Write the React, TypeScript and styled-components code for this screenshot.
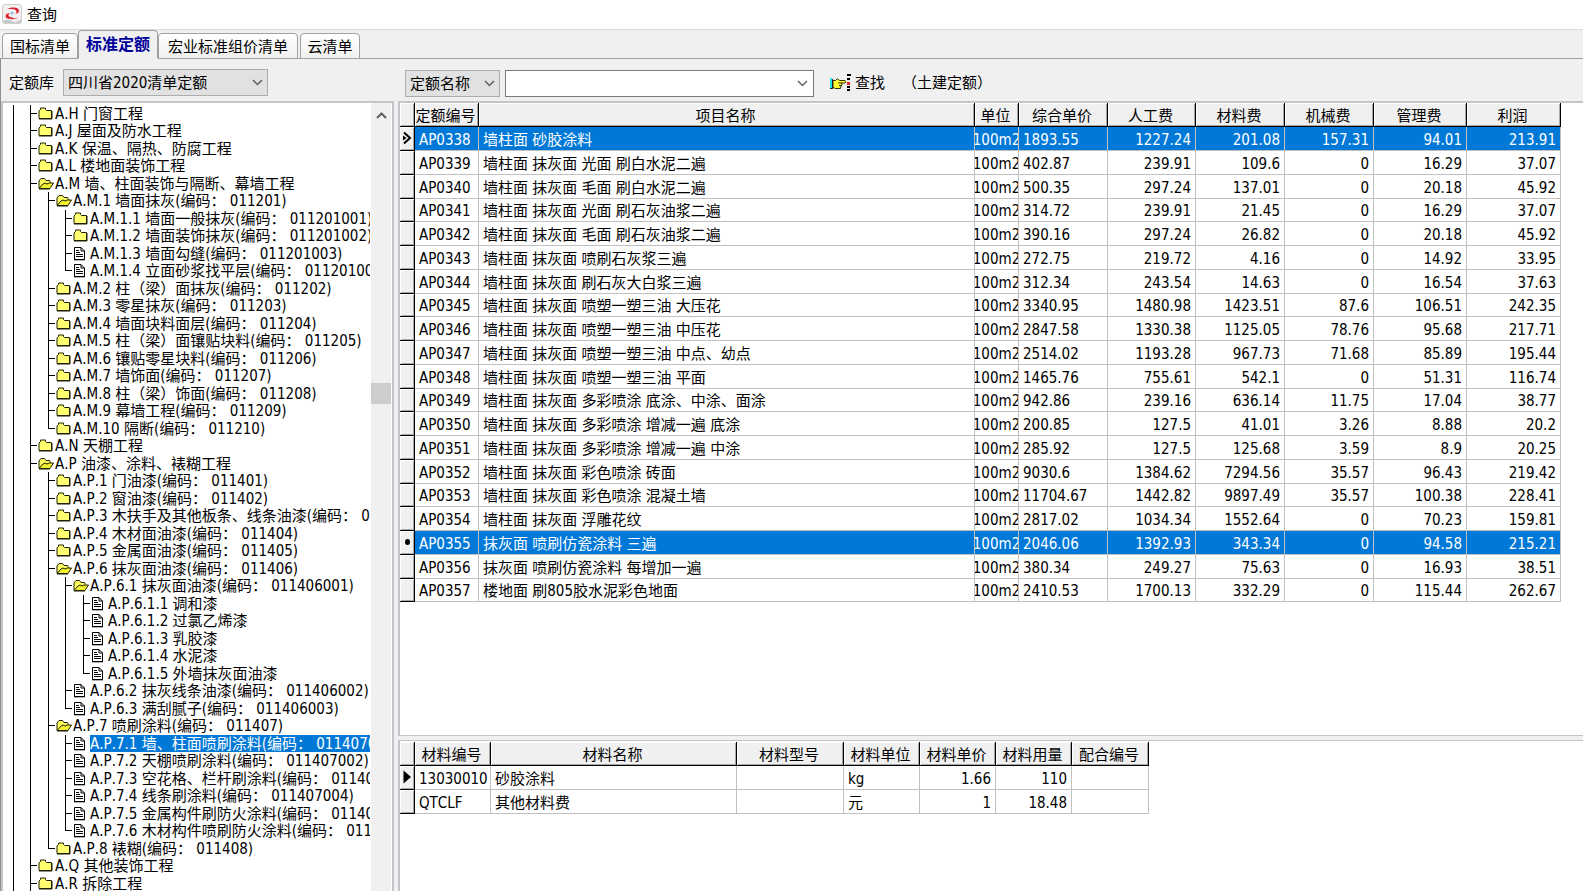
import React from 'react';
import styled, { createGlobalStyle } from 'styled-components';

const GlobalStyle = createGlobalStyle`
  *, *::before, *::after { box-sizing: border-box; }
  body {
    margin: 0;
    background: #fff;
    color: #000;
    overflow: hidden;
  }
  body, button, input, select, table {
    font-family: 'DejaVu Sans Condensed', 'Noto Sans CJK SC', sans-serif;
    font-size: 15px;
    font-kerning: none;
    line-height: 17px;
  }
`;

/* ---------- window frame ---------- */

const Window = styled.div`
  display: flex;
  flex-direction: column;
  height: 100vh;
  background: #f0f0f0;
`;

const TitleBar = styled.header`
  display: flex;
  align-items: center;
  gap: 4px;
  height: 29px;
  padding-left: 2px;
  background: #fff;
`;

const Title = styled.h1`
  margin: 0;
  padding-top: 2px;
  font-size: 15px;
  font-weight: 400;
`;

const TabStrip = styled.nav`
  display: flex;
  align-items: flex-end;
  height: 30px;
  padding-left: 2px;
  border-top: 1px solid #dcdcdc;
  box-shadow: inset 0 -1px 0 #a0a0a0;
`;

const Tab = styled.button<{ $width: number; $active?: boolean; $gap?: boolean }>`
  flex: none;
  width: ${p => p.$width}px;
  height: ${p => (p.$active ? 29 : 26)}px;
  margin: 0 0 0 ${p => (p.$gap ? 2 : 0)}px;
  padding: ${p => (p.$active ? '0' : '3px')} 0 0;
  border: 1px solid #a0a0a0;
  border-bottom-color: ${p => (p.$active ? '#f0f0f0' : '#a0a0a0')};
  border-radius: 4px 4px 0 0;
  background: ${p => (p.$active ? '#f0f0f0' : 'linear-gradient(#fff, #f0f0f0)')};
  color: ${p => (p.$active ? '#00009c' : '#000')};
  font-size: ${p => (p.$active ? 16 : 15)}px;
  font-weight: ${p => (p.$active ? 700 : 400)};
`;

const Page = styled.main`
  display: flex;
  flex: 1;
  flex-direction: column;
  min-height: 0;
  border-left: 1px solid #909090;
`;

/* ---------- toolbar ---------- */

const Toolbar = styled.div`
  display: flex;
  height: 42px;
`;

const LibraryGroup = styled.div`
  display: flex;
  align-items: center;
  gap: 9px;
  width: 396px;
  padding: 5px 0 0 8px;
`;

const SearchGroup = styled.div`
  display: flex;
  flex: 1;
  align-items: center;
  padding: 6px 0 0 8px;
`;

const FieldLabel = styled.label`
  padding-top: 2px;
`;

const SelectBox = styled.div<{ $width: number }>`
  position: relative;
  width: ${p => p.$width}px;
`;

const Select = styled.select`
  display: block;
  appearance: none;
  width: 100%;
  height: 27px;
  padding: 2px 4px 0;
  border: 1px solid #adadad;
  border-radius: 0;
  background: #e1e1e1;
  color: #000;
`;

const SelectArrow = styled.span`
  position: absolute;
  top: 0;
  right: 5px;
  bottom: 0;
  display: flex;
  align-items: center;
  pointer-events: none;
`;

const Combo = styled.div`
  display: flex;
  width: 309px;
  height: 27px;
  margin-left: 5px;
  border: 1px solid #7a7a7a;
  background: #fff;
`;

const ComboInput = styled.input`
  flex: 1;
  min-width: 0;
  padding: 0 4px;
  border: 0;
  outline: 0;
  background: transparent;
`;

const ComboButton = styled.button`
  display: flex;
  align-items: center;
  justify-content: center;
  width: 22px;
  padding: 0;
  border: 0;
  background: transparent;
`;

const FindButton = styled.button`
  display: flex;
  align-items: center;
  gap: 4px;
  margin-left: 16px;
  padding: 0;
  border: 0;
  background: transparent;
  color: #000;
`;

const Note = styled.span`
  margin-left: 17px;
`;

/* ---------- panels ---------- */

const Workspace = styled.div`
  display: flex;
  flex: 1;
  gap: 4px;
  min-height: 0;
`;

const TreePanel = styled.aside`
  display: flex;
  flex: none;
  width: 393px;
  padding-right: 1px;
  border: solid #c4c4ca;
  border-width: 2px 2px 0;
  background: #fff;
`;

const Tree = styled.ul`
  flex: 1;
  min-width: 0;
  margin: 0;
  padding: 2px 0 0;
  list-style: none;
  overflow: hidden;
`;

const TreeRow = styled.li`
  display: flex;
  height: 17px;
  padding-left: 10px;
  line-height: 17px;
  white-space: nowrap;
  &:nth-child(even) {
    height: 18px;
  }
`;

const Guide = styled.span`
  flex: none;
  width: 17px;
  border-left: 1px solid #000;
  &:nth-child(even) {
    width: 18px;
  }
`;

const Branch = styled.span<{ $last?: boolean }>`
  flex: none;
  width: 8px;
  background:
    linear-gradient(#000, #000) 0 0 / 1px ${p => (p.$last ? '9px' : '100%')} no-repeat,
    linear-gradient(#000, #000) 0 8px / 7px 1px no-repeat;
`;

const NodeIcon = styled.span`
  display: flex;
  flex: none;
  align-items: center;
  width: 17px;
  height: 17px;
`;

const NodeLabel = styled.span<{ $selected?: boolean }>`
  flex: 1;
  min-width: 0;
  margin-right: 1px;
  padding-top: 1px;
  overflow: hidden;
  background: ${p => (p.$selected ? '#0078d7' : 'transparent')};
  color: ${p => (p.$selected ? '#fff' : '#000')};
`;

const ScrollBar = styled.div`
  display: flex;
  flex: none;
  flex-direction: column;
  width: 20px;
  background: #f0f0f0;
`;

const ScrollButton = styled.button`
  display: flex;
  align-items: center;
  justify-content: center;
  height: 25px;
  padding: 0;
  border: 0;
  background: #f0f0f0;
`;

const ScrollTrack = styled.div<{ $grow: number }>`
  flex: ${p => p.$grow};
`;

const ScrollThumb = styled.div`
  height: 21px;
  background: #cdcdcd;
`;

const RightColumn = styled.div`
  display: flex;
  flex: 1;
  flex-direction: column;
  gap: 4px;
  min-width: 0;
`;

const QuotaPanel = styled.section`
  flex: 1;
  min-height: 0;
  padding: 0 22px 0 0;
  border: solid #c4c4ca;
  border-width: 2px 0 1px 2px;
  background: #fff;
  overflow: hidden;
`;

const MaterialPanel = styled.section`
  flex: none;
  height: 151px;
  padding-top: 1px;
  border: solid #c4c4ca;
  border-width: 1px 0 0 2px;
  background: #fff;
  overflow: hidden;
`;

/* ---------- data grids ---------- */

const Grid = styled.table<{ $fill?: boolean }>`
  width: ${p => (p.$fill ? '100%' : '749px')};
  border-collapse: separate;
  border-spacing: 0;
  table-layout: fixed;
  tbody tr:nth-child(4n) td {
    height: 23px;
  }
`;

const HeadCell = styled.th`
  height: 24px;
  padding: 4px 2px 0 0;
  border: solid #000;
  border-width: 0 1px 1px 0;
  background: #f0f0f0;
  box-shadow: inset 1px 1px 0 #fff, inset -1px -1px 0 #a8a8a8;
  font-weight: 400;
  white-space: nowrap;
  overflow: hidden;
`;

const MarkCell = styled.td`
  height: 24px;
  padding: 0;
  border: solid #000;
  border-width: 0 1px 1px 0;
  background: #f0f0f0;
  box-shadow: inset 1px 1px 0 #fff, inset -1px -1px 0 #a8a8a8;
  vertical-align: middle;
  svg {
    display: block;
    margin-left: 2px;
  }
`;

const Cell = styled.td<{ $align?: 'left' | 'right'; $selected?: boolean; $tight?: boolean }>`
  height: 24px;
  padding: ${p => (p.$tight ? '3px 0 0' : '3px 4px 0')};
  border: solid #c0c0c0;
  border-width: 0 1px 1px 0;
  background: ${p => (p.$selected ? '#0078d7' : '#fff')};
  color: ${p => (p.$selected ? '#fff' : '#000')};
  text-align: ${p => p.$align || 'left'};
  white-space: nowrap;
  overflow: hidden;
`;

const UnitText = styled.span`
  display: flex;
  justify-content: center;
  overflow: hidden;
`;

/* ---------- drawings ---------- */

const AppLogo = () => (
  <svg width="21" height="21" viewBox="0 0 21 21" aria-hidden="true">
    <rect x="0.5" y="0.5" width="19" height="19" rx="2.5" fill="#f4f0f0" stroke="#d4cccc" />
    <path d="M1 17 Q6 14 10 17 T19 15 V19 H1 Z" fill="#c3cbcb" />
    <path d="M5 5.500 C9 2.500 17 3 17 7 C17 8.800 15 9.800 13 10 C15.500 8.500 15 6.300 12 5.500 C9.500 4.900 7 5 5 5.500 Z" fill="#d8222e" />
    <path d="M16 14 C11.500 16 3.500 15.500 3.500 12 C3.500 10 6 9 8 9 C5.800 10.500 6 12.300 9 13.300 C11.500 14.200 14 14.300 16 14 Z" fill="#d8222e" />
    <circle cx="10" cy="9" r="1.500" fill="#8dbbe0" />
  </svg>
);

const Chevron = ({ up, weight = 1.5 }: { up?: boolean; weight?: number }) => (
  <svg width="11" height="7" viewBox="0 0 11 7" fill="none" stroke="#606060" strokeWidth={weight} aria-hidden="true">
    <path d={up ? 'M1 6 L5.500 1.500 L10 6' : 'M1 1 L5.500 5.500 L10 1'} />
  </svg>
);

const FindIcon = () => (
  <svg width="21" height="18" viewBox="0 0 21 18" aria-hidden="true">
    <path d="M3 6.500 H5.500 L7.500 4.800 L9.500 6.500 H15 Q16.500 7.500 15 9 H11.500 L12 11 L11 12 L10.500 14.500 H5.500 L3 13.500 Z" fill="#ffff30" stroke="#303000" />
    <path d="M8 9 H12 M9 11.500 H11.500" stroke="#303000" />
    <rect x="0" y="4" width="2" height="11" fill="#20e0e8" />
    <rect x="2" y="5" width="1" height="10" fill="#202020" />
    <rect x="0" y="14" width="3" height="1" fill="#202020" />
    <rect x="17" y="0" width="4" height="2" fill="#000" />
    <rect x="17" y="4" width="3" height="2" fill="#000" />
    <rect x="17" y="8" width="3" height="3" fill="#f02020" />
    <rect x="17" y="12" width="3" height="2" fill="#000" />
    <rect x="17" y="15" width="3" height="2" fill="#000" />
  </svg>
);

const ClosedFolder = () => (
  <svg width="15" height="13" viewBox="0 0 15 13" aria-hidden="true">
    <path d="M1 11.500 V4 L2.500 2.500 V1 H7.500 V2.500 L8.500 3.500 H13.500 V11.500 Z" fill="#ffff70" stroke="#202000" />
    <path d="M1 12 H14 V4" fill="none" stroke="#202000" />
  </svg>
);

const OpenFolder = () => (
  <svg width="17" height="13" viewBox="0 0 17 13" aria-hidden="true">
    <path d="M1 11 V4 L3 1.500 H6.500 L8 3.500 H11.500 L12.500 5.500" fill="#ffff60" stroke="#202000" />
    <path d="M1 11.500 L5 7 L7 6 L9 7 L11 6 H15.500 L12 11.500 Z" fill="#f0f030" stroke="#202000" />
    <path d="M1 12 H12" stroke="#202000" />
  </svg>
);

const FileIcon = () => (
  <svg width="13" height="14" viewBox="0 0 13 14" aria-hidden="true">
    <path d="M1.500 0.500 H8 L11.500 4 V12.500 H1.500 Z" fill="#fff" stroke="#000" />
    <path d="M8 0.500 V4 H11.500 M1 12.800 H12" fill="none" stroke="#000" />
    <path d="M3 3.500 H6 M3 5.500 H7 M3 7.500 H10 M3 9.500 H10" stroke="#000" />
  </svg>
);

const BrowseMark = () => (
  <svg width="10" height="15" viewBox="0 0 10 15" aria-hidden="true">
    <path d="M2 1.500 L8 7 L2 12.500" fill="none" stroke="#000" strokeWidth="2" />
    <path d="M1 4.500 L4.500 7 L1 9.500 Z" fill="#000" />
  </svg>
);

const DotMark = () => (
  <svg width="10" height="15" viewBox="0 0 10 15" aria-hidden="true">
    <ellipse cx="5.500" cy="7" rx="2.500" ry="3" fill="#000" />
  </svg>
);

const CurrentMark = () => (
  <svg width="10" height="15" viewBox="0 0 10 15" aria-hidden="true">
    <path d="M1.500 0.500 L9 7 L1.500 13.500 Z" fill="#000" />
  </svg>
);

/* ---------- data ---------- */

type Kind = 'closed' | 'open' | 'file';
type TreeNode = { depth: number; kind: Kind; text: string; last?: boolean; selected?: boolean };

const n = (depth: number, kind: Kind, text: string, last = false, selected = false): TreeNode => ({
  depth, kind, text, last, selected,
});

const treeNodes: TreeNode[] = [
  n(1, 'closed', 'A.H 门窗工程'),
  n(1, 'closed', 'A.J 屋面及防水工程'),
  n(1, 'closed', 'A.K 保温、隔热、防腐工程'),
  n(1, 'closed', 'A.L 楼地面装饰工程'),
  n(1, 'open', 'A.M 墙、柱面装饰与隔断、幕墙工程'),
  n(2, 'open', 'A.M.1 墙面抹灰(编码： 011201)'),
  n(3, 'closed', 'A.M.1.1 墙面一般抹灰(编码： 011201001)'),
  n(3, 'closed', 'A.M.1.2 墙面装饰抹灰(编码： 011201002)'),
  n(3, 'file', 'A.M.1.3 墙面勾缝(编码： 011201003)'),
  n(3, 'file', 'A.M.1.4 立面砂浆找平层(编码： 011201004)', true),
  n(2, 'closed', 'A.M.2 柱（梁）面抹灰(编码： 011202)'),
  n(2, 'closed', 'A.M.3 零星抹灰(编码： 011203)'),
  n(2, 'closed', 'A.M.4 墙面块料面层(编码： 011204)'),
  n(2, 'closed', 'A.M.5 柱（梁）面镶贴块料(编码： 011205)'),
  n(2, 'closed', 'A.M.6 镶贴零星块料(编码： 011206)'),
  n(2, 'closed', 'A.M.7 墙饰面(编码： 011207)'),
  n(2, 'closed', 'A.M.8 柱（梁）饰面(编码： 011208)'),
  n(2, 'closed', 'A.M.9 幕墙工程(编码： 011209)'),
  n(2, 'closed', 'A.M.10 隔断(编码： 011210)', true),
  n(1, 'closed', 'A.N 天棚工程'),
  n(1, 'open', 'A.P 油漆、涂料、裱糊工程'),
  n(2, 'closed', 'A.P.1 门油漆(编码： 011401)'),
  n(2, 'closed', 'A.P.2 窗油漆(编码： 011402)'),
  n(2, 'closed', 'A.P.3 木扶手及其他板条、线条油漆(编码： 011403)'),
  n(2, 'closed', 'A.P.4 木材面油漆(编码： 011404)'),
  n(2, 'closed', 'A.P.5 金属面油漆(编码： 011405)'),
  n(2, 'open', 'A.P.6 抹灰面油漆(编码： 011406)'),
  n(3, 'open', 'A.P.6.1 抹灰面油漆(编码： 011406001)'),
  n(4, 'file', 'A.P.6.1.1 调和漆'),
  n(4, 'file', 'A.P.6.1.2 过氯乙烯漆'),
  n(4, 'file', 'A.P.6.1.3 乳胶漆'),
  n(4, 'file', 'A.P.6.1.4 水泥漆'),
  n(4, 'file', 'A.P.6.1.5 外墙抹灰面油漆', true),
  n(3, 'file', 'A.P.6.2 抹灰线条油漆(编码： 011406002)'),
  n(3, 'file', 'A.P.6.3 满刮腻子(编码： 011406003)', true),
  n(2, 'open', 'A.P.7 喷刷涂料(编码： 011407)'),
  n(3, 'file', 'A.P.7.1 墙、柱面喷刷涂料(编码： 011407001)', false, true),
  n(3, 'file', 'A.P.7.2 天棚喷刷涂料(编码： 011407002)'),
  n(3, 'file', 'A.P.7.3 空花格、栏杆刷涂料(编码： 011407003)'),
  n(3, 'file', 'A.P.7.4 线条刷涂料(编码： 011407004)'),
  n(3, 'file', 'A.P.7.5 金属构件刷防火涂料(编码： 011407005)'),
  n(3, 'file', 'A.P.7.6 木材构件喷刷防火涂料(编码： 011407006)', true),
  n(2, 'closed', 'A.P.8 裱糊(编码： 011408)', true),
  n(1, 'closed', 'A.Q 其他装饰工程'),
  n(1, 'closed', 'A.R 拆除工程'),
];

const quotaColumns: { title: string; width?: number }[] = [
  { title: '', width: 15 },
  { title: '定额编号', width: 64 },
  { title: '项目名称' },
  { title: '单位', width: 44 },
  { title: '综合单价', width: 89 },
  { title: '人工费', width: 88 },
  { title: '材料费', width: 89 },
  { title: '机械费', width: 89 },
  { title: '管理费', width: 93 },
  { title: '利润', width: 94 },
];

const quotaRows: string[][] = [
  ['AP0338', '墙柱面 砂胶涂料', '1893.55', '1227.24', '201.08', '157.31', '94.01', '213.91'],
  ['AP0339', '墙柱面 抹灰面 光面 刷白水泥二遍', '402.87', '239.91', '109.6', '0', '16.29', '37.07'],
  ['AP0340', '墙柱面 抹灰面 毛面 刷白水泥二遍', '500.35', '297.24', '137.01', '0', '20.18', '45.92'],
  ['AP0341', '墙柱面 抹灰面 光面 刷石灰油浆二遍', '314.72', '239.91', '21.45', '0', '16.29', '37.07'],
  ['AP0342', '墙柱面 抹灰面 毛面 刷石灰油浆二遍', '390.16', '297.24', '26.82', '0', '20.18', '45.92'],
  ['AP0343', '墙柱面 抹灰面 喷刷石灰浆三遍', '272.75', '219.72', '4.16', '0', '14.92', '33.95'],
  ['AP0344', '墙柱面 抹灰面 刷石灰大白浆三遍', '312.34', '243.54', '14.63', '0', '16.54', '37.63'],
  ['AP0345', '墙柱面 抹灰面 喷塑一塑三油 大压花', '3340.95', '1480.98', '1423.51', '87.6', '106.51', '242.35'],
  ['AP0346', '墙柱面 抹灰面 喷塑一塑三油 中压花', '2847.58', '1330.38', '1125.05', '78.76', '95.68', '217.71'],
  ['AP0347', '墙柱面 抹灰面 喷塑一塑三油 中点、幼点', '2514.02', '1193.28', '967.73', '71.68', '85.89', '195.44'],
  ['AP0348', '墙柱面 抹灰面 喷塑一塑三油 平面', '1465.76', '755.61', '542.1', '0', '51.31', '116.74'],
  ['AP0349', '墙柱面 抹灰面 多彩喷涂 底涂、中涂、面涂', '942.86', '239.16', '636.14', '11.75', '17.04', '38.77'],
  ['AP0350', '墙柱面 抹灰面 多彩喷涂 增减一遍 底涂', '200.85', '127.5', '41.01', '3.26', '8.88', '20.2'],
  ['AP0351', '墙柱面 抹灰面 多彩喷涂 增减一遍 中涂', '285.92', '127.5', '125.68', '3.59', '8.9', '20.25'],
  ['AP0352', '墙柱面 抹灰面 彩色喷涂 砖面', '9030.6', '1384.62', '7294.56', '35.57', '96.43', '219.42'],
  ['AP0353', '墙柱面 抹灰面 彩色喷涂 混凝土墙', '11704.67', '1442.82', '9897.49', '35.57', '100.38', '228.41'],
  ['AP0354', '墙柱面 抹灰面 浮雕花纹', '2817.02', '1034.34', '1552.64', '0', '70.23', '159.81'],
  ['AP0355', '抹灰面 喷刷仿瓷涂料 三遍', '2046.06', '1392.93', '343.34', '0', '94.58', '215.21'],
  ['AP0356', '抹灰面 喷刷仿瓷涂料 每增加一遍', '380.34', '249.27', '75.63', '0', '16.93', '38.51'],
  ['AP0357', '楼地面 刷805胶水泥彩色地面', '2410.53', '1700.13', '332.29', '0', '115.44', '262.67'],
];

const quotaMarks: Record<string, React.ReactNode> = {
  AP0338: <BrowseMark />,
  AP0355: <DotMark />,
};

const materialColumns = [
  { title: '', width: 15 },
  { title: '材料编号', width: 76 },
  { title: '材料名称', width: 246 },
  { title: '材料型号', width: 107 },
  { title: '材料单位', width: 76 },
  { title: '材料单价', width: 76 },
  { title: '材料用量', width: 76 },
  { title: '配合编号', width: 77 },
];

const materialRows: string[][] = [
  ['13030010', '砂胶涂料', '', 'kg', '1.66', '110', ''],
  ['QTCLF', '其他材料费', '', '元', '1', '18.48', ''],
];

const Columns = ({ columns }: { columns: { title: string; width?: number }[] }) => (
  <>
    <colgroup>
      {columns.map((c, i) => <col key={i} width={c.width} />)}
    </colgroup>
    <thead>
      <tr>
        {columns.map((c, i) => <HeadCell key={i} scope="col">{c.title}</HeadCell>)}
      </tr>
    </thead>
  </>
);

const icons: Record<Kind, React.ReactNode> = {
  closed: <ClosedFolder />,
  open: <OpenFolder />,
  file: <FileIcon />,
};

export default function App() {
  return (
    <Window>
      <GlobalStyle />
      <TitleBar>
        <AppLogo />
        <Title>查询</Title>
      </TitleBar>
      <TabStrip role="tablist">
        <Tab role="tab" aria-selected="false" $width={76}>国标清单</Tab>
        <Tab role="tab" aria-selected="true" $width={80} $active>标准定额</Tab>
        <Tab role="tab" aria-selected="false" $width={140}>宏业标准组价清单</Tab>
        <Tab role="tab" aria-selected="false" $width={60} $gap>云清单</Tab>
      </TabStrip>
      <Page>
        <Toolbar>
          <LibraryGroup>
            <FieldLabel htmlFor="library">定额库</FieldLabel>
            <SelectBox $width={205}>
              <Select id="library">
                <option>四川省2020清单定额</option>
              </Select>
              <SelectArrow><Chevron /></SelectArrow>
            </SelectBox>
          </LibraryGroup>
          <SearchGroup>
            <SelectBox $width={95}>
              <Select aria-label="查找字段">
                <option>定额名称</option>
              </Select>
              <SelectArrow><Chevron /></SelectArrow>
            </SelectBox>
            <Combo>
              <ComboInput type="text" aria-label="查找内容" />
              <ComboButton type="button" aria-label="展开"><Chevron /></ComboButton>
            </Combo>
            <FindButton type="button"><FindIcon />查找</FindButton>
            <Note>（土建定额）</Note>
          </SearchGroup>
        </Toolbar>
        <Workspace>
          <TreePanel>
            <Tree role="tree">
              {treeNodes.map(node => (
                <TreeRow key={node.text} role="treeitem" aria-level={node.depth} aria-selected={!!node.selected}>
                  {Array.from({ length: node.depth }, (_, i) => <Guide key={i} />)}
                  <Branch $last={node.last} />
                  <NodeIcon>{icons[node.kind]}</NodeIcon>
                  <NodeLabel $selected={node.selected}>{node.text}</NodeLabel>
                </TreeRow>
              ))}
            </Tree>
            <ScrollBar>
              <ScrollButton type="button" aria-label="向上滚动"><Chevron up weight={2} /></ScrollButton>
              <ScrollTrack $grow={255} />
              <ScrollThumb />
              <ScrollTrack $grow={487} />
            </ScrollBar>
          </TreePanel>
          <RightColumn>
            <QuotaPanel>
              <Grid $fill>
                <Columns columns={quotaColumns} />
                <tbody>
                  {quotaRows.map(([code, name, price, ...fees]) => {
                    const mark = quotaMarks[code];
                    const selected = !!mark;
                    return (
                      <tr key={code}>
                        <MarkCell>{mark}</MarkCell>
                        <Cell $selected={selected}>{code}</Cell>
                        <Cell $selected={selected}>{name}</Cell>
                        <Cell $selected={selected} $tight><UnitText>100m2</UnitText></Cell>
                        <Cell $selected={selected}>{price}</Cell>
                        {fees.map((fee, i) => <Cell key={i} $align="right" $selected={selected}>{fee}</Cell>)}
                      </tr>
                    );
                  })}
                </tbody>
              </Grid>
            </QuotaPanel>
            <MaterialPanel>
              <Grid>
                <Columns columns={materialColumns} />
                <tbody>
                  {materialRows.map((row, r) => (
                    <tr key={row[0]}>
                      <MarkCell>{r === 0 && <CurrentMark />}</MarkCell>
                      {row.map((value, i) => (
                        <Cell key={i} $align={i === 4 || i === 5 ? 'right' : 'left'}>{value}</Cell>
                      ))}
                    </tr>
                  ))}
                </tbody>
              </Grid>
            </MaterialPanel>
          </RightColumn>
        </Workspace>
      </Page>
    </Window>
  );
}
